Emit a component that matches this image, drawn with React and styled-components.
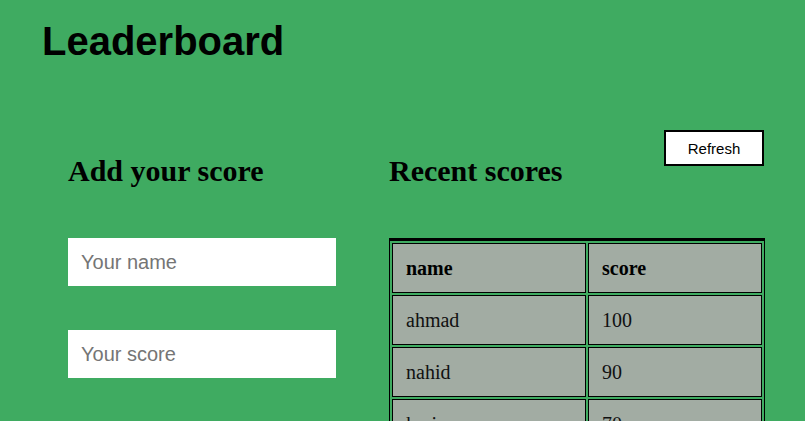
import React, { useState } from "react";
import styled, { createGlobalStyle } from "styled-components";

const GlobalStyle = createGlobalStyle`
  body {
    margin: 0;
    background: #3fab61;
    font-family: "Liberation Serif", "Times New Roman", serif;
  }
`;

const initialScores = [
  { user: "ahmad", score: 100 },
  { user: "nahid", score: 90 },
  { user: "karim", score: 70 },
];

function App() {
  const [scores] = useState(initialScores);

  return (
    <>
      <GlobalStyle />
      <Header>
        <Title>Leaderboard</Title>
      </Header>
      <Main>
        <Column>
          <SectionTitle>Add your score</SectionTitle>
          <Form>
            <Input type="text" placeholder="Your name" />
            <Input type="text" placeholder="Your score" />
          </Form>
        </Column>
        <Column>
          <TopRow>
            <SectionTitle>Recent scores</SectionTitle>
            <RefreshButton type="button">Refresh</RefreshButton>
          </TopRow>
          <Table>
            <thead>
              <tr>
                <Th>name</Th>
                <Th>score</Th>
              </tr>
            </thead>
            <tbody>
              {scores.map((s) => (
                <tr key={s.user}>
                  <Td>{s.user}</Td>
                  <Td>{s.score}</Td>
                </tr>
              ))}
            </tbody>
          </Table>
        </Column>
      </Main>
    </>
  );
}

const Header = styled.header`
  padding: 18px 0 0 42px;
`;

const Title = styled.h1`
  margin: 0;
  font-family: "Liberation Sans", Arial, sans-serif;
  font-size: 40px;
  line-height: 46px;
  font-weight: bold;
  color: #000;
`;

const Main = styled.main`
  display: grid;
  grid-template-columns: 268px 376px;
  column-gap: 53px;
  align-items: start;
  margin-top: 66px;
  padding-left: 68px;
`;

const Column = styled.section`
  display: flex;
  flex-direction: column;
`;

const TopRow = styled.div`
  display: flex;
  justify-content: space-between;
  align-items: flex-start;
`;

const SectionTitle = styled.h2`
  margin: 24px 0 0;
  font-size: 30px;
  line-height: 34px;
  font-weight: bold;
  color: #000;
`;

const Form = styled.form`
  display: flex;
  flex-direction: column;
  gap: 44px;
  margin-top: 50px;
`;

const Input = styled.input`
  box-sizing: border-box;
  width: 268px;
  height: 48px;
  padding: 0 13px;
  border: none;
  outline: none;
  background: #fff;
  font-family: "Liberation Sans", Arial, sans-serif;
  font-size: 20px;

  &::placeholder {
    color: #757575;
  }
`;

const RefreshButton = styled.button`
  box-sizing: border-box;
  width: 100px;
  height: 36px;
  margin-right: 1px;
  border: 2px solid #000;
  background: #fff;
  color: #000;
  font-family: "Liberation Sans", Arial, sans-serif;
  font-size: 15px;
  cursor: pointer;
`;

const Table = styled.table`
  width: 376px;
  margin-top: 50px;
  border: 1px solid #000;
  border-top-width: 3px;
  border-spacing: 2px;
  font-size: 20px;
`;

const Th = styled.th`
  height: 48px;
  padding: 0 13px;
  border: 1px solid #000;
  background: #a2aca3;
  text-align: left;
  font-weight: bold;
  &:first-child {
    width: 166px;
  }
`;

const Td = styled.td`
  height: 48px;
  padding: 0 13px;
  border: 1px solid #000;
  background: #a2aca3;
  color: #111;
`;

export default App;
